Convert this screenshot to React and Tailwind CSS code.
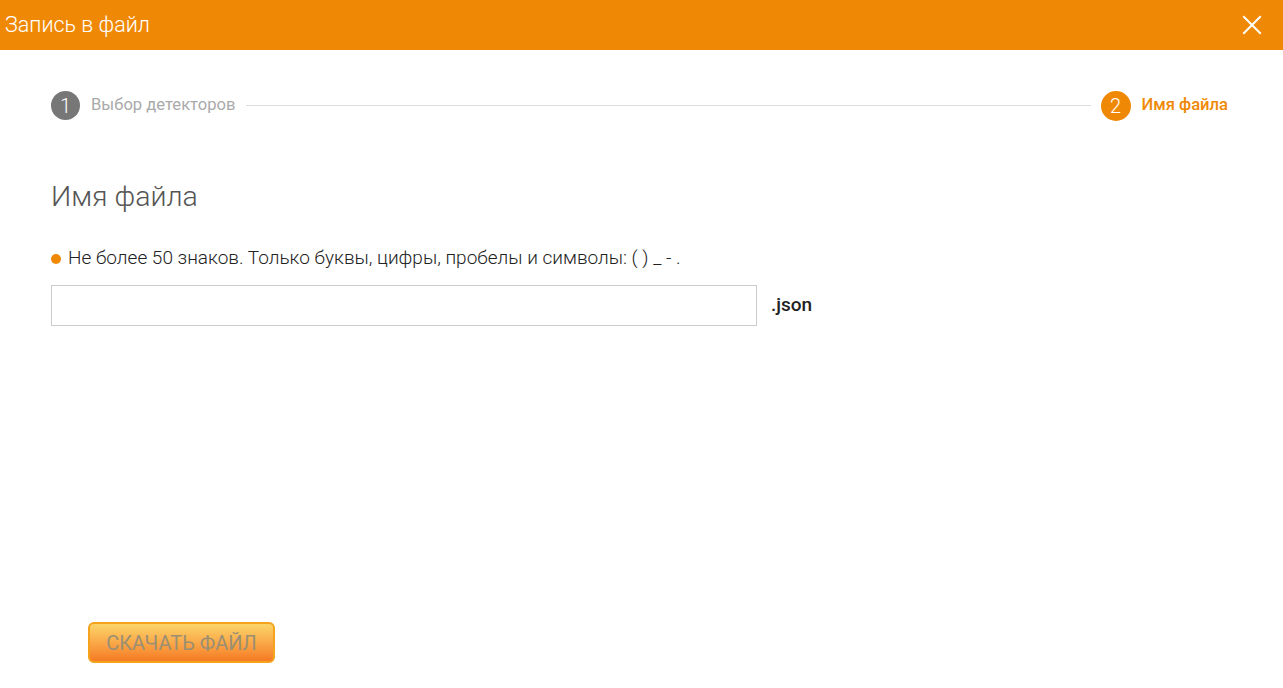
import React from 'react';

const App = () => {
    return (
        <div className="w-[1283px] h-[688px] bg-white flex flex-col font-['Roboto',sans-serif]">
            {/* HEADER */}
            <div className="h-[50px] bg-[#ef8905] flex items-center justify-between pl-[5px] pr-[21px] shrink-0">
                <span className="text-white text-[21.5px] font-light">Запись в файл</span>
                <button className="text-white">
                    <svg width="20" height="20" viewBox="0 0 20 20" stroke="currentColor" strokeWidth="2" strokeLinecap="square">
                        <path d="M2 2L18 18M18 2L2 18" />
                    </svg>
                </button>
            </div>

            <div className="flex-1 flex flex-col px-[51px]">
                {/* STEPPER */}
                <div className="flex items-center mt-[41px] h-[29px] pr-[4px]">
                    <div className="w-[29px] h-[29px] rounded-full bg-[#777] text-white flex items-center justify-center text-[20px] font-light">1</div>
                    <span className="ml-[11px] text-[16.6px] text-[#aaa]">Выбор детекторов</span>
                    <div className="flex-1 h-px bg-[#ddd] mx-[10px]" />
                    <div className="w-[30px] h-[30px] rounded-full bg-[#ef8905] text-white flex items-center justify-center text-[20px] font-light">2</div>
                    <span className="ml-[11px] text-[16.6px] text-[#ef8905] font-medium">Имя файла</span>
                </div>

                {/* CONTENT */}
                <h2 className="mt-[59px] text-[28.5px] font-light text-[#555] leading-[36px]">Имя файла</h2>

                <div className="mt-[31px] flex items-center gap-[7px] text-[19px] font-light text-[#222] leading-[24px]">
                    <span className="w-[10px] h-[10px] rounded-full bg-[#ef8905] mt-[2px]" />
                    <span>Не более 50 знаков. Только буквы, цифры, пробелы и символы: ( ) _ - .</span>
                </div>

                <div className="mt-[15px] flex items-center">
                    <input type="text" className="w-[706px] h-[41px] border border-[#ccc] outline-none px-2 text-[16px]" />
                    <span className="ml-[14px] text-[19px] font-medium text-[#222]">.json</span>
                </div>

                <div className="flex-1" />

                <div className="pl-[37px] pb-[25px]">
                    <button className="w-[187px] h-[41px] rounded-[6px] border-2 border-[#f5a21d] bg-gradient-to-b from-[#fad468] to-[#f57a22] text-[#9b8f73] text-[20px] uppercase">
                        Скачать файл
                    </button>
                </div>
            </div>
        </div>
    );
};

export default App;
